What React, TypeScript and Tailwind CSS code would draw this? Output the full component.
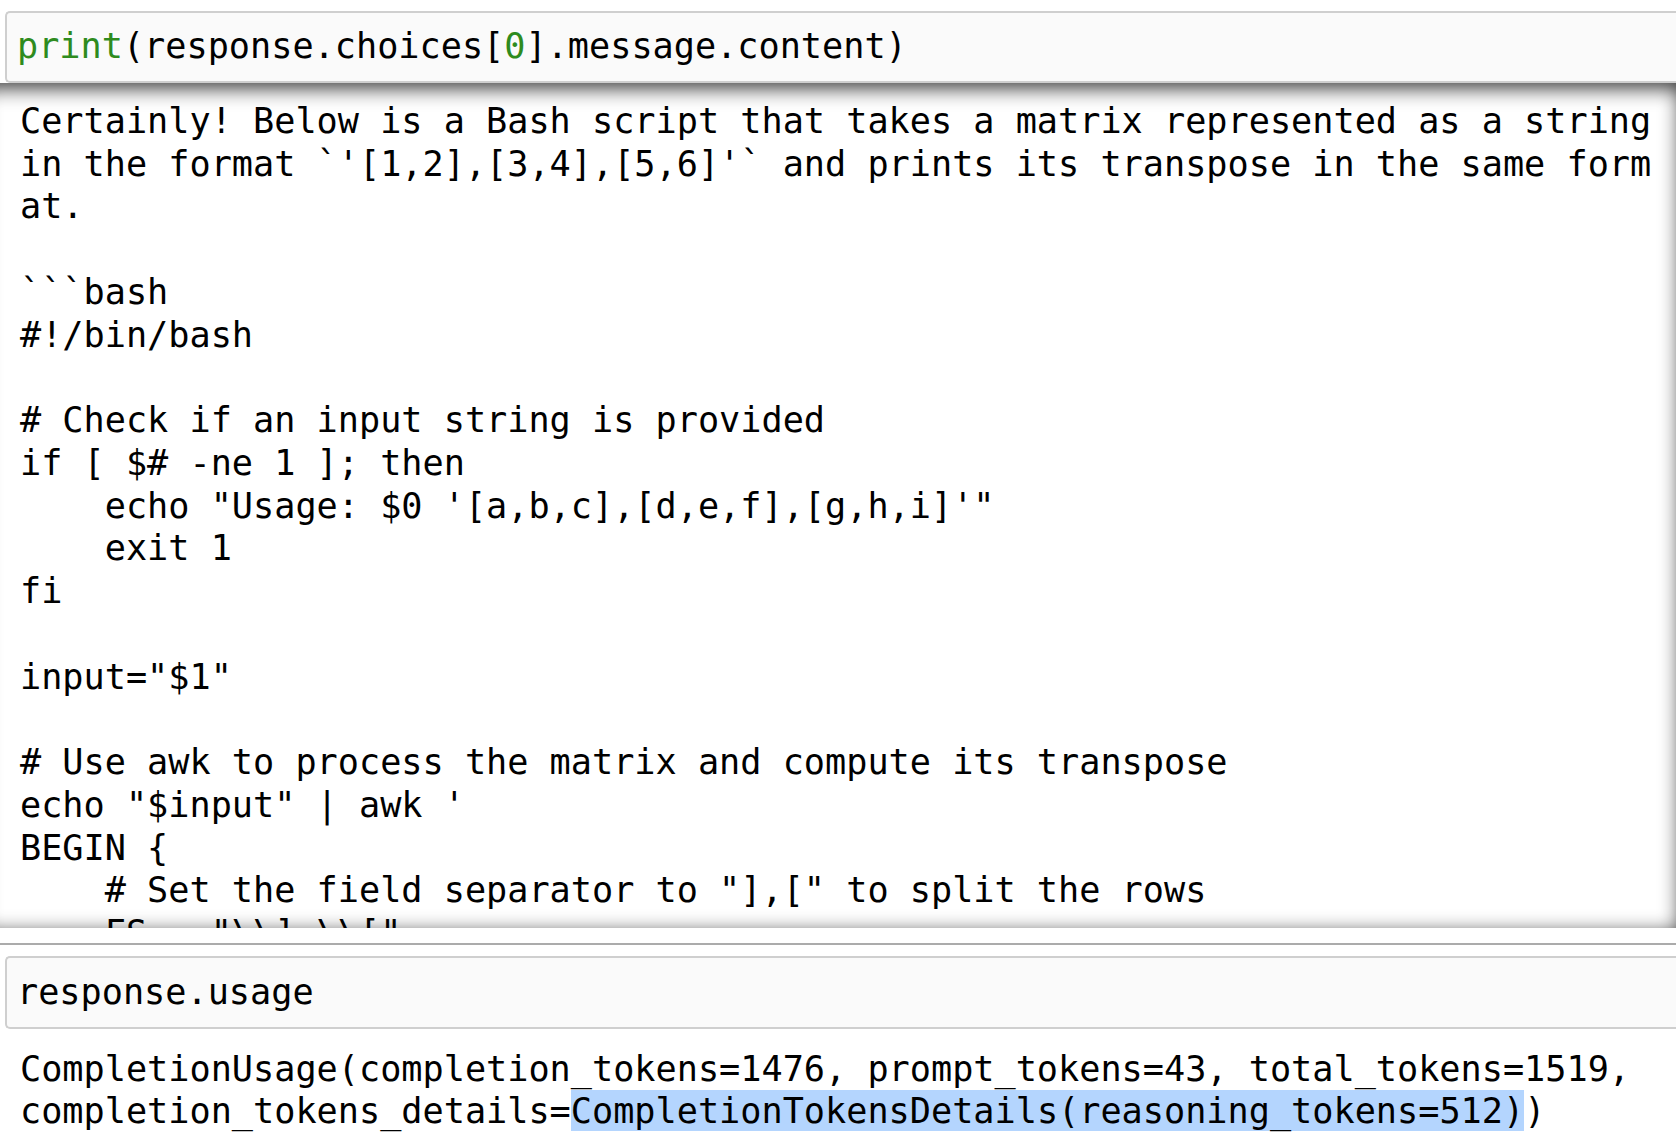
import React from "react";

const outLines: string[] = [
  "Certainly! Below is a Bash script that takes a matrix represented as a string",
  "in the format `'[1,2],[3,4],[5,6]'` and prints its transpose in the same form",
  "at.",
  "",
  "```bash",
  "#!/bin/bash",
  "",
  "# Check if an input string is provided",
  "if [ $# -ne 1 ]; then",
  "    echo \"Usage: $0 '[a,b,c],[d,e,f],[g,h,i]'\"",
  "    exit 1",
  "fi",
  "",
  "input=\"$1\"",
  "",
  "# Use awk to process the matrix and compute its transpose",
  "echo \"$input\" | awk '",
  "BEGIN {",
  "    # Set the field separator to \"],[\" to split the rows",
  "    FS = \"\\\\],\\\\[\"",
  "}",
];

export default function App() {
  return (
    <div className="w-[1676px] h-[1142px] bg-white overflow-hidden text-black font-['DejaVu_Sans_Mono','Liberation_Mono',monospace] text-[35.2px] leading-[42.75px]">
      {/* input cell 1 */}
      <div className="pt-[11px] pl-[5px]">
        <div className="border-2 border-r-0 border-[#cfcfcf] rounded-l-[5px] bg-[#fafafa] pt-[12px] pb-[13px] pl-[10px] mr-[-10px] whitespace-pre">
          <span className="text-[#2e8b1e]">print</span>
          <span>(response.choices[</span>
          <span className="text-[#2e8b1e]">0</span>
          <span>].message.content)</span>
        </div>
      </div>

      {/* output scroll */}
      <div className="ml-[-20px] mr-[-4px] h-[845px] overflow-hidden rounded-[5px] shadow-[inset_0_5px_20px_rgba(0,0,0,0.8)] pt-[17px] pl-[40px]">
        {outLines.map((l, i) => (
          <div key={i} className="whitespace-pre h-[42.75px]">
            {l}
          </div>
        ))}
      </div>

      <div className="mt-[15px] h-[2px] bg-[#ababab]" />

      {/* input cell 2 */}
      <div className="pt-[11px] pl-[5px]">
        <div className="border-2 border-r-0 border-[#cfcfcf] rounded-l-[5px] bg-[#fafafa] pt-[13px] pb-[13px] pl-[10px] mr-[-10px] whitespace-pre">
          response.usage
        </div>
      </div>

      {/* output 2 */}
      <div className="pt-[19px] pl-[20px]">
        <div className="whitespace-pre">
          CompletionUsage(completion_tokens=1476, prompt_tokens=43, total_tokens=1519,
        </div>
        <div className="whitespace-pre">
          <span>completion_tokens_details=</span>
          <span className="bg-[#b4d5fe]">CompletionTokensDetails(reasoning_tokens=512)</span>
          <span>)</span>
        </div>
      </div>
    </div>
  );
}
